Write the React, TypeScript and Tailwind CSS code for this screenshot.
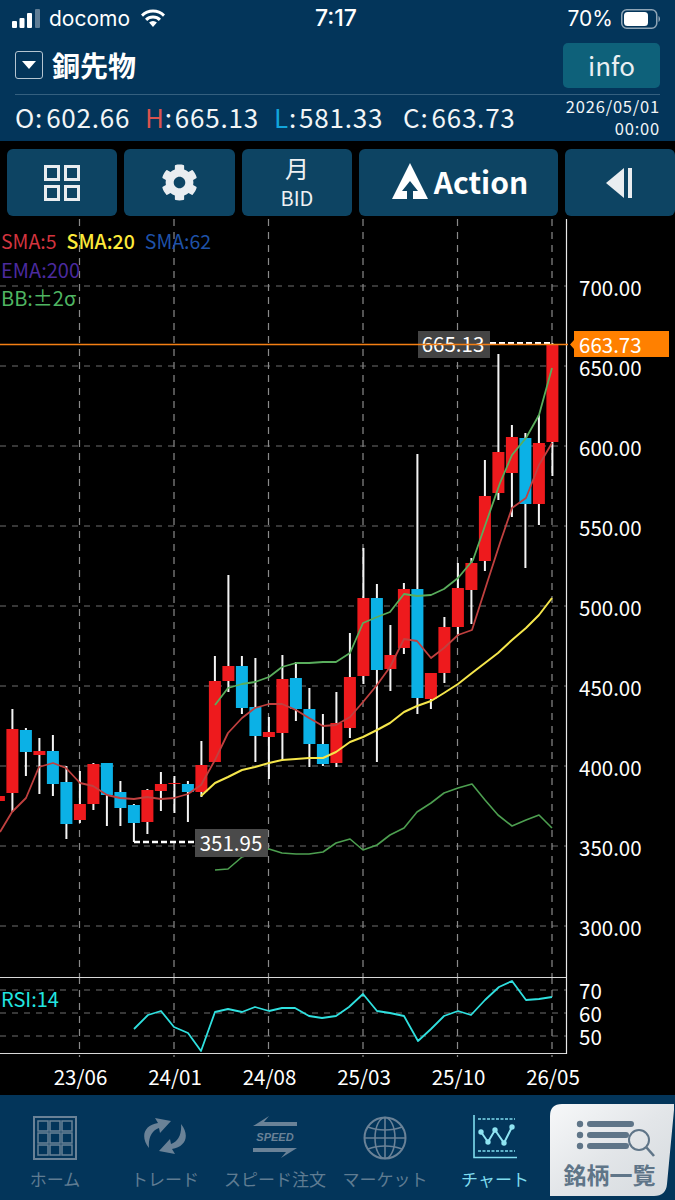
import React from 'react'
import { FaCog } from 'react-icons/fa'

// [high, low, bodyTop, bodyBottom, up] in screen pixels, oldest first
const candles: [number, number, number, number, boolean][] = [
  [790, 806, 796, 801, true],
  [709, 812, 729, 793, true],
  [728, 776, 730, 752, false],
  [738, 794, 751, 755, true],
  [735, 796, 751, 784, false],
  [766, 839, 782, 824, false],
  [771, 823, 804, 820, true],
  [763, 810, 764, 804, true],
  [763, 826, 763, 795, false],
  [781, 826, 792, 808, false],
  [804, 842, 805, 823, false],
  [789, 834, 790, 822, true],
  [772, 811, 784, 791, true],
  [776, 813, 783, 784, true],
  [781, 822, 784, 792, false],
  [741, 797, 765, 792, true],
  [656, 762, 681, 762, true],
  [575, 692, 666, 681, true],
  [656, 714, 666, 708, false],
  [658, 762, 707, 736, false],
  [717, 779, 732, 737, true],
  [655, 760, 679, 733, true],
  [662, 721, 678, 709, false],
  [688, 767, 709, 744, false],
  [714, 766, 744, 764, false],
  [692, 767, 723, 763, true],
  [633, 738, 677, 728, true],
  [548, 684, 598, 676, true],
  [584, 762, 598, 670, false],
  [625, 691, 655, 669, true],
  [583, 654, 589, 648, true],
  [454, 714, 589, 698, false],
  [673, 709, 673, 699, true],
  [617, 683, 627, 673, true],
  [563, 636, 588, 627, true],
  [558, 624, 563, 590, true],
  [460, 571, 496, 561, true],
  [354, 500, 452, 493, true],
  [425, 517, 437, 473, true],
  [433, 568, 438, 504, false],
  [415, 525, 443, 504, true],
  [343, 476, 345, 442, true],
]

const cx = (i: number) => 552.4 - 13.5 * (41 - i)

const sma5 =
  '0,832 12,812 26,798 39,767 53,763 66,768 80,783 93,786 107,795 120,798 134,799 147,797 161,799 174,798 188,794 201,785 215,760 228,733 242,718 255,708 269,704 282,704 296,710 309,718 323,726 336,725 350,717 363,702 377,685 390,667 404,639 417,641 431,658 444,648 458,635 472,630 488,580 500,543 512,508 526,498 539,465 552,443'
const sma20 =
  '201,796 215,783 228,777 242,770 255,767 269,763 282,760 296,759 309,758 323,758 336,752 350,742 363,737 377,730 390,723 404,712 417,706 431,701 444,693 458,684 472,673 485,663 498,653 512,640 526,628 539,615 552,598'
const bbUpper =
  '215,705 228,688 242,684 255,682 269,677 282,667 296,663 309,663 323,662 336,662 350,653 363,623 377,617 390,612 404,594 417,596 431,595 444,589 458,578 473,560 487,520 500,483 512,455 526,438 539,415 552,368'
const bbLower =
  '215,870 228,869 242,857 255,853 269,849 282,853 296,854 309,854 323,852 336,843 350,839 363,850 377,845 390,835 404,828 417,812 431,803 444,793 458,788 472,784 485,800 498,815 512,826 526,820 539,815 552,828'
const rsi =
  '134,1029 148,1015 161,1011 174,1027 188,1033 201,1051 215,1012 228,1009 242,1012 255,1007 269,1011 282,1008 295,1008 309,1016 322,1018 336,1016 349,1007 363,994 377,1011 390,1013 404,1016 418,1041 431,1029 444,1016 458,1011 471,1015 485,1000 499,987 512,981 526,1000 539,999 552,997'

const priceTicks = [
  [700, 286],
  [650, 366],
  [600, 446],
  [550, 526],
  [500, 606],
  [450, 686],
  [400, 766],
  [350, 846],
  [300, 926],
]
const gridX = [79.5, 174, 268.5, 363, 457.5, 552]
const dateLabels = ['23/06', '24/01', '24/08', '25/03', '25/10', '26/05']

const Chart = () => (
  <svg viewBox="0 219 675 876" className="absolute inset-0 w-full h-full">
    {priceTicks.map(([, y]) => (
      <line key={y} x1={0} x2={566} y1={y} y2={y} stroke="#6f6f6f" strokeWidth={1.2} strokeDasharray="6 6" />
    ))}
    {[990, 1013, 1036].map((y) => (
      <line key={y} x1={0} x2={566} y1={y} y2={y} stroke="#6f6f6f" strokeWidth={1.2} strokeDasharray="6 6" />
    ))}
    {gridX.map((x) => (
      <React.Fragment key={x}>
        <line x1={x} x2={x} y1={219} y2={977} stroke="#8a8a8a" strokeWidth={1.2} strokeDasharray="7 6" />
        <line x1={x} x2={x} y1={977} y2={1057} stroke="#8a8a8a" strokeWidth={1.2} strokeDasharray="7 6" />
      </React.Fragment>
    ))}

    <line x1={566.5} x2={566.5} y1={219} y2={1054} stroke="#e8e8e8" strokeWidth={1.2} />
    <line x1={0} x2={566} y1={977.5} y2={977.5} stroke="#d8d8d8" strokeWidth={1.2} />
    <line x1={0} x2={566} y1={1053.5} y2={1053.5} stroke="#d8d8d8" strokeWidth={1.2} />

    {candles.map(([hi, lo, top, bottom, up], i) => (
      <g key={i}>
        <rect x={cx(i) - 1} y={hi} width={2} height={lo - hi} fill="#f4f4f4" />
        <rect
          x={cx(i) - 6}
          y={top}
          width={12}
          height={Math.max(bottom - top, 1)}
          fill={up ? '#ee1a1d' : '#0bb1e6'}
        />
      </g>
    ))}

    <polyline points={sma5} fill="none" stroke="#c0403f" strokeWidth={1.8} strokeLinejoin="round" />
    <polyline points={sma20} fill="none" stroke="#f5e64b" strokeWidth={2} strokeLinejoin="round" />
    <polyline points={bbUpper} fill="none" stroke="#59ad5c" strokeWidth={1.8} strokeLinejoin="round" />
    <polyline points={bbLower} fill="none" stroke="#4d9f50" strokeWidth={1.6} strokeLinejoin="round" />
    <polyline points={rsi} fill="none" stroke="#2fe0df" strokeWidth={1.8} strokeLinejoin="round" />

    {/* low marker */}
    <line x1={134} x2={196} y1={842} y2={842} stroke="#fff" strokeWidth={2.4} strokeDasharray="6 3" />
    <rect x={195} y={829} width={73} height={28} fill="#4a4a4a" />
    <text x={231} y={851} textAnchor="middle" className="fill-white text-[20.5px]">
      351.95
    </text>

    {/* high marker */}
    <line x1={490} x2={552} y1={343} y2={343} stroke="#fff" strokeWidth={2} strokeDasharray="6 3" />
    <rect x={418} y={331} width={72} height={27} fill="#444444" />
    <text x={453} y={352} textAnchor="middle" className="fill-white text-[20.5px]">
      665.13
    </text>
    <line x1={0} x2={568} y1={344.5} y2={344.5} stroke="#f47f14" strokeWidth={1.6} />

    {/* last price */}
    <path d="M570 344.5 L574 340 V331 H669 V357 H574 V349Z" fill="#ff8000" />
    <text x={579} y={353} className="fill-white text-[20.5px]">
      663.73
    </text>

    {priceTicks.map(([p, y]) => (
      <text key={p} x={579} y={y + 10} className="fill-white text-[20.5px]">
        {p}.00
      </text>
    ))}
    {[
      [70, 999],
      [60, 1022],
      [50, 1045],
    ].map(([v, y]) => (
      <text key={v} x={579} y={y} className="fill-white text-[20.5px]">
        {v}
      </text>
    ))}
    {dateLabels.map((d, i) => (
      <text key={d} x={gridX[i] + 1} y={1085} textAnchor="middle" className="fill-white text-[20.5px]">
        {d}
      </text>
    ))}
  </svg>
)

const StatusBar = () => (
  <div className="h-[38px] flex items-center pl-[12px] pr-[15px] font-['Inter',sans-serif]">
    <div className="flex-1 flex items-center">
      <svg width={30} height={20} viewBox="0 0 30 20" className="shrink-0">
        <rect x={0} y={12} width={5} height={7} rx={1} fill="#fff" />
        <rect x={7.5} y={9} width={5} height={10} rx={1} fill="#fff" />
        <rect x={15} y={4} width={5} height={15} rx={1} fill="#fff" />
        <rect x={23} y={0} width={5} height={19} rx={1} fill="#5f7d95" />
      </svg>
      <span className="ml-[7px] text-[21px] leading-none">docomo</span>
      <svg width={26} height={19} viewBox="0 0 26 19" className="ml-[10px]">
        <path d="M13 3a17 17 0 0 1 12 5l-2 2.300a14 14 0 0 0-20 0L1 8a17 17 0 0 1 12-5Z" fill="#fff" transform="translate(0 -2.500)" />
        <path d="M13 7a11 11 0 0 1 8 3.300l-2.200 2.300a8 8 0 0 0-11.600 0L5 10.300A11 11 0 0 1 13 7Z" fill="#fff" transform="translate(0 -0.500)" />
        <path d="M13 12a5.500 5.500 0 0 1 3.900 1.600L13 18l-3.900-4.400A5.500 5.500 0 0 1 13 12Z" fill="#fff" />
      </svg>
    </div>
    <span className="text-[23px] font-medium leading-none">7:17</span>
    <div className="flex-1 flex items-center justify-end">
      <span className="text-[21px] leading-none">70%</span>
      <svg width={39} height={20} viewBox="0 0 39 20" className="ml-[8px]">
        <rect x={0.75} y={0.75} width={35} height={18.500} rx={5} fill="none" stroke="#8fa5b6" strokeWidth={1.5} />
        <rect x={3} y={3} width={24} height={14} rx={3.500} fill="#fff" />
        <path d="M37.500 7v6c1-.5 1.500-1.700 1.500-3s-.5-2.500-1.500-3Z" fill="#8fa5b6" />
      </svg>
    </div>
  </div>
)

const Header = () => (
  <header className="h-[141px] shrink-0 bg-[#03355a] text-white flex flex-col">
    <StatusBar />
    <div className="h-[58px] mx-[15px] pt-[5px] flex items-start justify-between border-b border-[#35607f]">
      <div className="flex items-center mt-[8px]">
        <div className="w-[28px] h-[28px] rounded-[3px] border border-[#b5c5d1] flex items-center justify-center">
          <div className="w-0 h-0 border-x-[7px] border-x-transparent border-t-[8px] border-t-white" />
        </div>
        <span className="ml-[9px] text-[28px] font-bold leading-none">銅先物</span>
      </div>
      <div className="w-[97px] h-[45px] pb-[1px] rounded-[5px] bg-[#0e617a] flex items-center justify-center text-[26px] leading-none text-[#e9eff2]">
        info
      </div>
    </div>
    <div className="flex-1 pl-[15px] pr-[15px] pb-[2px] flex items-center text-[26px] tracking-[0.8px] text-[#f2f5f7] leading-none">
      <div className="w-[130px] flex gap-[3px]">
        <span>O:</span>
        <span>602.66</span>
      </div>
      <div className="w-[129px] flex gap-[2px]">
        <span>
          <span className="text-[#d9534f]">H</span>:
        </span>
        <span>665.13</span>
      </div>
      <div className="w-[129px] flex gap-[2px]">
        <span>
          <span className="text-[#12a5dc]">L</span>:
        </span>
        <span>581.33</span>
      </div>
      <div className="flex gap-[3px]">
        <span>C:</span>
        <span>663.73</span>
      </div>
      <div className="ml-auto flex flex-col items-end text-[16.5px] leading-[22px] tracking-[0.8px]">
        <span>2026/05/01</span>
        <span>00:00</span>
      </div>
    </div>
  </header>
)

const ToolButton = ({ width, children }: { width: string; children: React.ReactNode }) => (
  <div className={`${width} h-[67px] shrink-0 rounded-[6px] bg-[#0d4463] flex items-center justify-center text-[#eef1f3]`}>
    {children}
  </div>
)

const Toolbar = () => (
  <div className="h-[78px] shrink-0 pt-[8px] pl-[7px] flex gap-[7px]">
    <ToolButton width="w-[110px]">
      <svg width={36} height={36} viewBox="0 0 36 36" fill="none" stroke="#e9edf0" strokeWidth={3}>
        <rect x={1.500} y={1.500} width={13} height={13} />
        <rect x={21.500} y={1.500} width={13} height={13} />
        <rect x={1.500} y={21.500} width={13} height={13} />
        <rect x={21.500} y={21.500} width={13} height={13} />
      </svg>
    </ToolButton>
    <ToolButton width="w-[111px]">
      <FaCog size={37} color="#e9edf0" />
    </ToolButton>
    <ToolButton width="w-[110px]">
      <div className="flex flex-col items-center leading-none -mt-[2px]">
        <span className="text-[24px] mb-[8px]">月</span>
        <span className="text-[20px]">BID</span>
      </div>
    </ToolButton>
    <ToolButton width="w-[199px]">
      <svg width={36} height={36} viewBox="0 0 36 36" className="ml-[3px] -mt-[3px]">
        <path d="M18 0 36 36H0Z" fill="#fff" />
        <path d="M18 18 26 28H21V36H15V28H10Z" fill="#0d4463" />
      </svg>
      <span className="ml-[6px] -mt-[3px] text-[30px] font-bold leading-none text-white">Action</span>
    </ToolButton>
    <ToolButton width="w-[110px]">
      <svg width={27} height={30} viewBox="0 0 27 30" fill="#e9edf0" className="mr-[2px]">
        <path d="M18 0V30L0 15Z" />
        <rect x={22} y={0} width={4} height={30} />
      </svg>
    </ToolButton>
  </div>
)

const Legend = () => (
  <>
    <div className="absolute top-[8px] left-[1px] flex flex-col text-[20px] leading-[28.500px]">
      <div className="flex gap-[10px] text-[19.5px]">
        <span className="text-[#d3343f]">SMA:5</span>
        <span className="text-[#fdea3a] font-medium">SMA:20</span>
        <span className="text-[#1f52a8]">SMA:62</span>
      </div>
      <span className="text-[#4b2a9e]">EMA:200</span>
      <span className="text-[#4fb562]">BB:±2σ</span>
    </div>
    <span className="absolute top-[766px] left-[1px] text-[20px] leading-[28px] text-[#22e5e0]">RSI:14</span>
  </>
)

const Tab = ({ label, active, children }: { label: string; active?: boolean; children: React.ReactNode }) => (
  <div className="w-[110px] shrink-0 flex flex-col items-center pt-[21px]">
    <div className="h-[50px] flex items-start justify-center">{children}</div>
    <span className={`mt-[4px] text-[17px] leading-none whitespace-nowrap ${active ? 'text-[#7fdcee]' : 'text-[#5f7c92]'}`}>
      {label}
    </span>
  </div>
)

const HomeIcon = () => (
  <svg width={44} height={44} viewBox="0 0 44 44" fill="none" stroke="#6a8297" strokeWidth={1.5}>
    <rect x={1} y={1} width={42} height={42} strokeWidth={2} />
    {[5, 17, 29].map((y) =>
      [5, 17, 29].map((x) => <rect key={`${x}-${y}`} x={x} y={y} width={10} height={10} />),
    )}
  </svg>
)

const TradeIcon = () => (
  <svg width={44} height={38} viewBox="0 0 44 38" fill="#6a8297" className="mt-[1px]">
    <path d="M6 31C-3 20 1 8 15 6L12 1 28 4 17 16 16 11C9 13 5 21 6 31Z" />
    <path d="M6 31C-3 20 1 8 15 6L12 1 28 4 17 16 16 11C9 13 5 21 6 31Z" transform="rotate(180 22 19)" />
  </svg>
)

const SpeedIcon = () => (
  <div className="w-[44px] flex flex-col items-center">
    <svg width={44} height={11} viewBox="0 0 44 11" fill="#6a8297">
      <path d="M0 10 16 0 11 6H44V10Z" />
    </svg>
    <span className="text-[11px] font-bold italic leading-[20px] text-[#6a8297] font-['Liberation_Sans',sans-serif]">SPEED</span>
    <svg width={44} height={11} viewBox="0 0 44 11" fill="#6a8297">
      <path d="M44 1 28 11 33 5H0V1Z" />
    </svg>
  </div>
)

const GlobeIcon = () => (
  <svg width={44} height={44} viewBox="0 0 44 44" fill="none" stroke="#6a8297" strokeWidth={1.6}>
    <circle cx={22} cy={22} r={20.500} strokeWidth={2} />
    <ellipse cx={22} cy={22} rx={10} ry={20.500} />
    <line x1={22} x2={22} y1={1.500} y2={42.500} />
    <line x1={1.500} x2={42.500} y1={22} y2={22} />
    <path d="M5 11C15 15 29 15 39 11" />
    <path d="M5 33C15 29 29 29 39 33" />
  </svg>
)

const ChartIcon = () => (
  <svg width={44} height={44} viewBox="0 0 44 44" fill="none" stroke="#7fdcee" className="-mt-[1px]">
    <path d="M1 0V42.500H44" strokeWidth={1.6} />
    <line x1={5} x2={42} y1={4} y2={4} strokeWidth={1.4} strokeDasharray="3 1.500" />
    <line x1={5} x2={42} y1={36} y2={36} strokeWidth={1.4} strokeDasharray="3 1.500" />
    <polyline points="8,17 15,27 22,15 31,28 39,12" strokeWidth={2} stroke="#8fe4f2" />
    {[
      [8, 17],
      [15, 27],
      [22, 15],
      [31, 28],
      [39, 12],
    ].map(([x, y]) => (
      <circle key={x} cx={x} cy={y} r={2.700} fill="#8fe4f2" stroke="none" />
    ))}
  </svg>
)

const ListTab = () => (
  <div className="w-[124px] h-[92px] mt-[9px] shrink-0 flex flex-col items-center bg-gradient-to-br from-[#f7f8f9] via-[#e3e6e9] to-[#d5dade] [clip-path:path('M0_12Q0_0_12_0L124_0L124_6L117_80Q116_92_104_92L0_92Z')]">
    <svg width={80} height={53} viewBox="0 0 80 53" className="mt-[13px] ml-[8px] shrink-0">
      <circle cx={4} cy={7} r={3.200} fill="#5f7588" />
      <circle cx={4} cy={18} r={3.200} fill="#5f7588" />
      <circle cx={4} cy={29} r={3.200} fill="#5f7588" />
      <rect x={11} y={4} width={47} height={6} rx={3} fill="#5f7588" />
      <rect x={11} y={15} width={42} height={6} rx={3} fill="#5f7588" />
      <rect x={11} y={26} width={42} height={6} rx={3} fill="#5f7588" />
      <circle cx={63} cy={23} r={10} fill="none" stroke="#5f7588" strokeWidth={2} />
      <line x1={70.500} y1={30.500} x2={78} y2={39} stroke="#5f7588" strokeWidth={2.600} />
    </svg>
    <span className="-mt-[7px] -ml-[5px] text-[23px] font-bold leading-none text-[#5f7588] whitespace-nowrap">銘柄一覧</span>
  </div>
)

const TabBar = () => (
  <nav className="h-[105px] shrink-0 bg-[#03355a] flex">
    <Tab label="ホーム">
      <HomeIcon />
    </Tab>
    <Tab label="トレード">
      <TradeIcon />
    </Tab>
    <Tab label="スピード注文">
      <SpeedIcon />
    </Tab>
    <Tab label="マーケット">
      <GlobeIcon />
    </Tab>
    <Tab label="チャート" active>
      <ChartIcon />
    </Tab>
    <ListTab />
  </nav>
)

export default function App() {
  return (
    <div className="w-[675px] h-[1200px] bg-black flex flex-col overflow-hidden font-['Noto_Sans_CJK_JP','Noto_Sans',sans-serif]">
      <Header />
      <Toolbar />
      <main className="relative flex-1">
        <Chart />
        <Legend />
      </main>
      <TabBar />
    </div>
  )
}
